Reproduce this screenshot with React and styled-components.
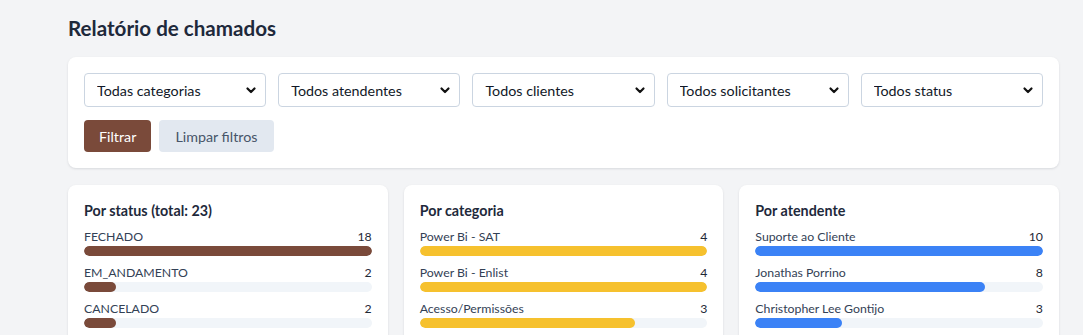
import React from "react";
import styled, { createGlobalStyle } from "styled-components";

const Global = createGlobalStyle`
  html, body { margin: 0; padding: 0; background: #f3f4f6; }
  body { font-family: Lato, "Noto Sans", sans-serif; color: #1e293b; }
  * { box-sizing: border-box; }
`;

const Page = styled.main`
  padding: 16px 24px 24px 68px;
  min-height: 335px;
`;

const Title = styled.h1`
  margin: 0 0 17px;
  font-size: 20.6px;
  line-height: 24px;
  font-weight: 700;
  color: #1e293b;
`;

const Card = styled.section`
  background: #fff;
  border-radius: 8px;
  box-shadow: 0 1px 3px rgba(15, 23, 42, 0.08), 0 1px 2px rgba(15, 23, 42, 0.04);
  padding: 16px;
`;

const FilterGrid = styled.div`
  display: grid;
  grid-template-columns: repeat(5, 1fr);
  gap: 12px;
`;

const SelectWrap = styled.div`
  position: relative;
`;

const Select = styled.select`
  appearance: none;
  width: 100%;
  height: 34px;
  border: 1px solid #cbd5e1;
  border-radius: 4px;
  background: #fff;
  padding: 0 28px 0 12px;
  font-family: inherit;
  font-size: 14.3px;
  color: #111827;
`;

const Chevron = styled.svg`
  position: absolute;
  right: 9px;
  top: 50%;
  transform: translateY(-50%);
  pointer-events: none;
`;

const Actions = styled.div`
  display: flex;
  gap: 8px;
  margin-top: 13px;
`;

const Button = styled.button`
  height: 32px;
  border: none;
  border-radius: 4px;
  padding: 0 ${(p) => (p.$primary ? "15px" : "16px")};
  font-family: inherit;
  font-size: 14.3px;
  cursor: pointer;
  background: ${(p) => (p.$primary ? "#7a4a3a" : "#e2e8f0")};
  color: ${(p) => (p.$primary ? "#ffffff" : "#475569")};
`;

const StatsGrid = styled.div`
  display: grid;
  grid-template-columns: repeat(3, 1fr);
  gap: 16px;
  margin-top: 17px;
`;

const StatTitle = styled.h2`
  margin: 0 0 8px;
  font-size: 14.3px;
  line-height: 20px;
  font-weight: 700;
  color: #1e293b;
`;

const Row = styled.div`
  margin-bottom: 9px;
`;

const RowHead = styled.div`
  display: flex;
  justify-content: space-between;
  font-size: 12.3px;
  line-height: 16px;
  color: #334155;
  margin-bottom: 1px;
`;

const Value = styled.span`
  font-weight: 400;
  color: #1f2937;
`;

const Track = styled.div`
  height: 10px;
  border-radius: 5px;
  background: #f1f5f9;
  overflow: hidden;
`;

const Fill = styled.div`
  height: 100%;
  border-radius: 5px;
  background: ${(p) => p.$color};
`;

const filters = [
  "Todas categorias",
  "Todos atendentes",
  "Todos clientes",
  "Todos solicitantes",
  "Todos status",
];

const stats = [
  {
    title: "Por status (total: 23)",
    color: "#7a4a3a",
    items: [
      ["FECHADO", 18],
      ["EM_ANDAMENTO", 2],
      ["CANCELADO", 2],
    ],
  },
  {
    title: "Por categoria",
    color: "#f6c12e",
    items: [
      ["Power Bi - SAT", 4],
      ["Power Bi - Enlist", 4],
      ["Acesso/Permissões", 3],
    ],
  },
  {
    title: "Por atendente",
    color: "#3b82f6",
    items: [
      ["Suporte ao Cliente", 10],
      ["Jonathas Porrino", 8],
      ["Christopher Lee Gontijo", 3],
    ],
  },
];

export default function App() {
  return (
    <Page>
      <Global />
      <Title>Relatório de chamados</Title>
      <Card>
        <FilterGrid>
          {filters.map((f) => (
            <SelectWrap key={f}>
              <Select defaultValue={f}>
                <option>{f}</option>
              </Select>
              <Chevron width="12" height="12" viewBox="0 0 12 12">
                <path d="M2.5 4.5 L6 8 L9.5 4.5" fill="none" stroke="#111" strokeWidth="2.2" strokeLinecap="round" strokeLinejoin="round" />
              </Chevron>
            </SelectWrap>
          ))}
        </FilterGrid>
        <Actions>
          <Button $primary>Filtrar</Button>
          <Button>Limpar filtros</Button>
        </Actions>
      </Card>
      <StatsGrid>
        {stats.map((s) => {
          const max = Math.max(...s.items.map((i) => i[1]));
          return (
            <Card key={s.title}>
              <StatTitle>{s.title}</StatTitle>
              {s.items.map(([label, v]) => (
                <Row key={label}>
                  <RowHead>
                    <span>{label}</span>
                    <Value>{v}</Value>
                  </RowHead>
                  <Track>
                    <Fill $color={s.color} style={{ width: `${(v / max) * 100}%` }} />
                  </Track>
                </Row>
              ))}
            </Card>
          );
        })}
      </StatsGrid>
    </Page>
  );
}
